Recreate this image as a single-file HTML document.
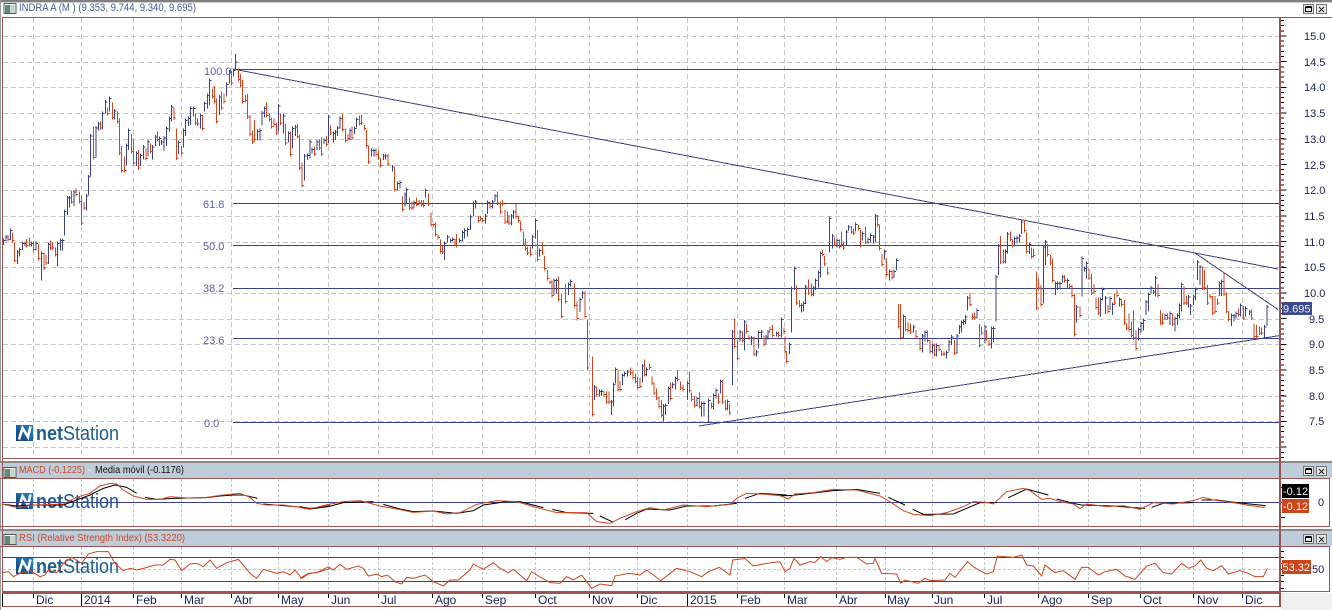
<!DOCTYPE html>
<html><head><meta charset="utf-8"><style>
html,body{margin:0;padding:0;background:#fff;width:1332px;height:610px;overflow:hidden}
svg{display:block;font-family:"Liberation Sans",sans-serif}
</style></head><body>
<svg width="1332" height="610" viewBox="0 0 1332 610" xmlns="http://www.w3.org/2000/svg">
<defs><linearGradient id="lg" x1="0" y1="1" x2="1" y2="0"><stop offset="0" stop-color="#0d3f78"/><stop offset="1" stop-color="#2a86c4"/></linearGradient></defs>
<rect width="1332" height="610" fill="#fff"/>
<rect x="1281" y="593" width="51" height="17" fill="#f0f0f0"/>
<rect x="0" y="0" width="1332" height="2" fill="#808080"/>
<rect x="0" y="2" width="1332" height="1" fill="#cfcfcf"/>
<rect x="0" y="0" width="1" height="610" fill="#9a9a9a"/>
<g shape-rendering="crispEdges">
<rect x="0" y="461" width="1332" height="2" fill="#8a8a8a"/>
<rect x="0" y="463" width="1332" height="15" fill="#bfccd9"/>
<rect x="0" y="529" width="1332" height="2" fill="#8a8a8a"/>
<rect x="0" y="531" width="1332" height="15" fill="#bfccd9"/>
<!-- grid main -->
<g stroke="#c6c6c6" stroke-width="1" stroke-dasharray="5 3" fill="none">
<path d="M3 36.5H1279M3 62.5H1279M3 87.5H1279M3 113.5H1279M3 139.5H1279M3 165.5H1279M3 190.5H1279M3 216.5H1279M3 242.5H1279M3 267.5H1279M3 293.5H1279M3 319.5H1279M3 344.5H1279M3 370.5H1279M3 396.5H1279M3 421.5H1279M3 447.5H1279"/>
<path d="M33.5 18V458M81.5 18V458M133.5 18V458M181.5 18V458M231.5 18V458M278.5 18V458M328.5 18V458M378.5 18V458M432.5 18V458M482.5 18V458M535.5 18V458M589.5 18V458M637.5 18V458M687.5 18V458M737.5 18V458M784.5 18V458M836.5 18V458M885.5 18V458M932.5 18V458M984.5 18V458M1038.5 18V458M1088.5 18V458M1140.5 18V458M1193.5 18V458M1242.5 18V458"/>
</g>
<!-- grid sub -->
<g stroke="#c6c6c6" stroke-width="1" stroke-dasharray="3 2" fill="none">
<path d="M33.5 479V526M81.5 479V526M133.5 479V526M181.5 479V526M231.5 479V526M278.5 479V526M328.5 479V526M378.5 479V526M432.5 479V526M482.5 479V526M535.5 479V526M589.5 479V526M637.5 479V526M687.5 479V526M737.5 479V526M784.5 479V526M836.5 479V526M885.5 479V526M932.5 479V526M984.5 479V526M1038.5 479V526M1088.5 479V526M1140.5 479V526M1193.5 479V526M1242.5 479V526"/>
<path d="M33.5 547V592M81.5 547V592M133.5 547V592M181.5 547V592M231.5 547V592M278.5 547V592M328.5 547V592M378.5 547V592M432.5 547V592M482.5 547V592M535.5 547V592M589.5 547V592M637.5 547V592M687.5 547V592M737.5 547V592M784.5 547V592M836.5 547V592M885.5 547V592M932.5 547V592M984.5 547V592M1038.5 547V592M1088.5 547V592M1140.5 547V592M1193.5 547V592M1242.5 547V592"/>
<path d="M3 569.5H1279"/>
</g>
</g>
<!-- logos -->
<rect x="16" y="425" width="17" height="16" fill="url(#lg)"/><path d="M19 439.5L22.5 428L28 437L30.5 426.5" fill="none" stroke="#fff" stroke-width="2.6"/>
<text x="36" y="440" font-size="20" fill="#1c5d92" textLength="83" lengthAdjust="spacingAndGlyphs"><tspan font-weight="bold">net</tspan>Station</text>
<rect x="16" y="493" width="17" height="16" fill="url(#lg)"/><path d="M19 507.5L22.5 496L28 505L30.5 494.5" fill="none" stroke="#fff" stroke-width="2.6"/>
<text x="36" y="508" font-size="20" fill="#1c5d92" textLength="83" lengthAdjust="spacingAndGlyphs"><tspan font-weight="bold">net</tspan>Station</text>
<rect x="16" y="558" width="17" height="16" fill="url(#lg)"/><path d="M19 572.5L22.5 561L28 570L30.5 559.5" fill="none" stroke="#fff" stroke-width="2.6"/>
<text x="36" y="573" font-size="20" fill="#1c5d92" textLength="83" lengthAdjust="spacingAndGlyphs"><tspan font-weight="bold">net</tspan>Station</text>
<!-- fib & trend lines -->
<g stroke="#3b4289" stroke-width="1" fill="none" shape-rendering="crispEdges">
<path d="M233 69.5H1280M233 203.5H1280M233 245.5H1280M233 288.5H1280M233 338.5H1280M233 422.5H1280"/>
<path d="M233 69L1195 253L1278 269"/>
<path d="M1195 253L1278 309.5"/>
<path d="M699 426L1280 335.5"/>
</g>
<!-- bars -->
<g fill="none" stroke-width="3" shape-rendering="crispEdges">
<g transform="translate(0,60) scale(.33333)">
<path stroke="#3b4289" d="M10 555V535m0 6h6M18 545V525m0 6h6M32 540V505m0 6h6M52 612V570m0 6h6M58 590V562m0 6h6M68 570V545m0 6h6M75 560V545m0 6h6M95 560V545m0 6h6M108 572V545m0 6h6M125 662V575m0 6h6M145 612V548m0 6h6M172 620V545m0 6h6M182 572V535m0 6h6M188 572V535m0 6h6M194 527V448m0 6h6M202 465V408m0 6h6M208 442V408m0 6h6M222 438V390m0 6h6M260 452V402m0 6h6M266 405V345m0 6h6M272 350V222m0 6h6M288 292V198m0 6h6M296 212V186m0 6h6M308 208V155m0 6h6M316 160V120m0 6h6M328 155V110m0 6h6M344 178V147m0 6h6M380 315V250m0 6h6M386 270V205m0 6h6M410 318V275m0 6h6M422 318V280m0 6h6M430 298V255m0 6h6M444 290V240m0 6h6M458 298V255m0 6h6M466 258V225m0 6h6M478 258V230m0 6h6M485 255V240m0 6h6M492 272V228m0 6h6M500 258V200m0 6h6M508 215V170m0 6h6M515 185V135m0 6h6M536 282V242m0 6h6M550 262V205m0 6h6M557 228V175m0 6h6M565 198V170m0 6h6M572 195V140m0 6h6M580 170V140m0 6h6M602 205V160m0 6h6M614 155V125m0 6h6M622 145V100m0 6h6M629 135V55m0 6h6M658 165V105m0 6h6M679 110V68m0 6h6M688 70V30m0 6h6"/>
<path stroke="#d2451e" d="M24 525V545m0-6h6M37 517V548m0-6h6M44 548V608m0-6h6M80 537V563m0-6h6M88 532V560m0-6h6M100 545V575m0-6h6M115 552V602m0-6h6M132 578V630m0-6h6M138 585V615m0-6h6M152 542V570m0-6h6M158 548V570m0-6h6M166 562V590m0-6h6M214 393V432m0-6h6M228 385V410m0-6h6M238 395V430m0-6h6M244 408V495m0-6h6M252 428V450m0-6h6M280 200V298m0-6h6M302 185V210m0-6h6M322 143V167m0-6h6M337 128V178m0-6h6M352 155V190m0-6h6M358 175V285m0-6h6M364 258V338m0-6h6M374 290V338m0-6h6M394 222V280m0-6h6M400 238V315m0-6h6M416 270V330m0-6h6M438 265V302m0-6h6M452 250V280m0-6h6M472 215V245m0-6h6M522 143V180m0-6h6M529 205V300m0-6h6M544 258V285m0-6h6M587 160V195m0-6h6M593 175V198m0-6h6M607 165V212m0-6h6M638 85V115m0-6h6M644 78V130m0-6h6M650 115V190m0-6h6M665 95V150m0-6h6M672 100V130m0-6h6"/>
</g>
<g transform="translate(230,60) scale(.33333)">
<path stroke="#3b4289" d="M10 50V25m0 6h6M16 28V-18m0 24h6M82 242V208m0 6h6M90 242V205m0 6h6M96 197V153m0 6h6M103 172V140m0 6h6M145 215V132m0 6h6M160 220V162m0 6h6M175 248V215m0 6h6M188 265V200m0 6h6M196 228V195m0 6h6M223 362V282m0 6h6M233 300V280m0 6h6M240 295V240m0 6h6M246 280V262m0 6h6M261 270V240m0 6h6M282 252V235m0 6h6M295 250V165m0 6h6M310 248V215m0 6h6M316 240V210m0 6h6M322 228V198m0 6h6M330 205V170m0 6h6M360 240V205m0 6h6M373 222V200m0 6h6M380 202V172m0 6h6M424 290V265m0 6h6M432 290V265m0 6h6M461 300V282m0 6h6M467 298V282m0 6h6M488 335V315m0 6h6M503 392V365m0 6h6M510 385V362m0 6h6M525 440V398m0 6h6M530 432V382m0 6h6M552 445V422m0 6h6M587 412V385m0 6h6M643 600V545m0 6h6M653 548V525m0 6h6M661 548V535m0 6h6M668 545V532m0 6h6M688 548V535m0 6h6M697 545V512m0 6h6M704 535V505m0 6h6M712 530V502m0 6h6M721 510V465m0 6h6M730 470V425m0 6h6M737 445V420m0 6h6M767 490V462m0 6h6M773 462V422m0 6h6M787 445V420m0 6h6M795 425V402m0 6h6M845 495V462m0 6h6M851 475V450m0 6h6M908 565V525m0 6h6M916 535V475m0 6h6M929 590V565m0 6h6M972 705V655m0 6h6M980 700V655m0 6h6M1016 705V668m0 6h6M1022 680V658m0 6h6M1050 756V712m0 6h6M1058 715V693m0 6h6"/>
<path stroke="#d2451e" d="M5 33V75m0-6h6M25 25V65m0-6h6M32 42V82m0-6h6M38 60V130m0-6h6M46 105V128m0-6h6M52 102V177m0-6h6M60 165V228m0-6h6M68 212V252m0-6h6M74 180V245m0-6h6M110 127V172m0-6h6M118 160V185m0-6h6M125 172V205m0-6h6M132 175V200m0-6h6M140 188V225m0-6h6M152 160V195m0-6h6M167 190V255m0-6h6M182 215V290m0-6h6M202 192V235m0-6h6M208 225V330m0-6h6M216 308V383m0-6h6M254 260V288m0-6h6M268 238V270m0-6h6M275 232V288m0-6h6M290 228V260m0-6h6M302 195V225m0-6h6M337 162V215m0-6h6M347 205V248m0-6h6M354 222V242m0-6h6M366 200V240m0-6h6M388 167V197m0-6h6M395 165V195m0-6h6M403 195V212m0-6h6M410 210V262m0-6h6M416 258V312m0-6h6M438 265V290m0-6h6M445 272V300m0-6h6M452 295V322m0-6h6M474 282V318m0-6h6M494 322V395m0-6h6M518 410V455m0-6h6M538 412V450m0-6h6M546 425V450m0-6h6M560 412V440m0-6h6M567 420V435m0-6h6M574 420V440m0-6h6M581 420V442m0-6h6M595 400V438m0-6h6M603 458V500m0-6h6M610 490V500m0-6h6M617 488V530m0-6h6M624 525V538m0-6h6M632 538V580m0-6h6M637 555V582m0-6h6M675 535V555m0-6h6M680 522V562m0-6h6M745 468V488m0-6h6M752 468V482m0-6h6M758 475V488m0-6h6M780 425V445m0-6h6M802 395V435m0-6h6M811 425V462m0-6h6M818 420V438m0-6h6M825 450V492m0-6h6M832 455V490m0-6h6M837 465V495m0-6h6M858 430V475m0-6h6M866 468V488m0-6h6M872 485V515m0-6h6M880 515V558m0-6h6M887 535V572m0-6h6M893 560V585m0-6h6M901 560V590m0-6h6M923 510V605m0-6h6M937 548V585m0-6h6M944 588V632m0-6h6M952 630V662m0-6h6M960 662V672m0-6h6M966 662V712m0-6h6M986 650V725m0-6h6M994 700V775m0-6h6M1007 672V730m0-6h6M1033 670V742m0-6h6M1041 725V782m0-6h6M1065 695V775m0-6h6"/>
</g>
<g transform="translate(580,200) scale(.33333)">
<path stroke="#3b4289" d="M44 600V555m0 6h6M58 590V568m0 6h6M64 588V568m0 6h6M95 645V600m0 6h6M100 620V548m0 6h6M107 550V503m0 6h6M127 555V520m0 6h6M134 530V515m0 6h6M142 530V510m0 6h6M187 548V492m0 6h6M200 528V502m0 6h6M250 665V612m0 6h6M256 645V610m0 6h6M265 612V560m0 6h6M278 565V548m0 6h6M286 568V530m0 6h6M322 600V545m0 6h6M351 620V590m0 6h6M365 650V605m0 6h6M372 650V605m0 6h6M386 668V595m0 6h6M401 628V580m0 6h6M408 595V565m0 6h6M421 580V538m0 6h6M442 632V598m0 6h6M458 555V390m0 6h6M480 425V390m0 6h6M494 452V360m0 6h6M514 435V408m0 6h6M530 470V450m0 6h6M536 445V392m0 6h6M544 415V390m0 6h6M558 432V405m0 6h6M564 418V390m0 6h6M590 410V395m0 6h6M604 412V352m0 6h6M628 462V428m0 6h6M635 398V260m0 6h6M644 270V200m0 6h6M665 338V310m0 6h6M670 335V305m0 6h6M677 312V255m0 6h6M700 288V258m0 6h6M707 270V235m0 6h6M715 262V212m0 6h6M722 232V155m0 6h6M749 158V50m0 6h6M757 145V102m0 6h6M771 142V115m0 6h6M800 138V90m0 6h6M806 92V75m0 6h6M827 95V68m0 6h6M848 122V95m0 6h6M864 132V112m0 6h6M872 128V100m0 6h6M880 130V105m0 6h6M886 128V42m0 6h6M913 178V148m0 6h6M929 242V208m0 6h6M942 232V208m0 6h6M950 212V175m0 6h6"/>
<path stroke="#d2451e" d="M22 360V510m0-6h6M37 470V650m0-6h6M50 560V590m0-6h6M72 575V590m0-6h6M80 575V612m0-6h6M87 575V612m0-6h6M114 510V575m0-6h6M120 543V575m0-6h6M152 502V525m0-6h6M159 510V538m0-6h6M166 520V550m0-6h6M172 530V568m0-6h6M180 532V565m0-6h6M193 478V530m0-6h6M209 490V508m0-6h6M216 530V555m0-6h6M222 548V585m0-6h6M230 565V600m0-6h6M237 590V625m0-6h6M244 600V652m0-6h6M272 548V602m0-6h6M292 512V545m0-6h6M302 545V570m0-6h6M309 555V575m0-6h6M328 515V578m0-6h6M335 578V605m0-6h6M344 588V622m0-6h6M358 578V625m0-6h6M394 608V625m0-6h6M415 580V612m0-6h6M427 540V612m0-6h6M436 600V632m0-6h6M449 610V645m0-6h6M464 355V445m0-6h6M472 420V482m0-6h6M487 395V428m0-6h6M500 370V400m0-6h6M507 405V420m0-6h6M522 410V468m0-6h6M552 408V440m0-6h6M570 380V395m0-6h6M577 375V412m0-6h6M596 395V412m0-6h6M612 382V400m0-6h6M615 410V460m0-6h6M620 455V490m0-6h6M650 255V315m0-6h6M658 300V322m0-6h6M686 238V285m0-6h6M694 250V290m0-6h6M727 150V170m0-6h6M734 168V198m0-6h6M743 203V225m0-6h6M764 113V138m0-6h6M778 118V145m0-6h6M784 95V140m0-6h6M791 125V150m0-6h6M814 78V102m0-6h6M820 85V105m0-6h6M835 75V92m0-6h6M842 88V143m0-6h6M857 80V132m0-6h6M893 45V80m0-6h6M899 75V152m0-6h6M906 162V200m0-6h6M920 175V230m0-6h6M936 210V238m0-6h6"/>
</g>
<g transform="translate(890,210) scale(.33333)">
<path stroke="#3b4289" d="M40 385V313m0 6h6M70 368V345m0 6h6M97 428V372m0 6h6M105 395V362m0 6h6M127 430V400m0 6h6M140 440V400m0 6h6M170 445V422m0 6h6M177 425V390m0 6h6M185 405V375m0 6h6M201 432V372m0 6h6M208 372V345m0 6h6M214 368V332m0 6h6M220 345V328m0 6h6M226 342V315m0 6h6M233 302V258m0 6h6M261 325V295m0 6h6M285 400V345m0 6h6M304 415V350m0 6h6M311 398V350m0 6h6M318 335V195m0 6h6M325 195V102m0 6h6M346 160V118m0 6h6M353 130V66m0 6h6M374 110V80m0 6h6M381 100V78m0 6h6M388 98V72m0 6h6M395 72V30m0 6h6M418 132V98m0 6h6M460 280V105m0 6h6M466 165V90m0 6h6M496 255V215m0 6h6M503 240V215m0 6h6M510 238V215m0 6h6M517 218V195m0 6h6M532 235V205m0 6h6M560 338V285m0 6h6M576 260V140m0 6h6M583 185V170m0 6h6M590 205V155m0 6h6M631 320V262m0 6h6M638 272V232m0 6h6M646 312V258m0 6h6M660 300V260m0 6h6M667 315V278m0 6h6M688 290V262m0 6h6M745 392V352m0 6h6M753 368V335m0 6h6M761 362V325m0 6h6M768 315V270m0 6h6M775 305V248m0 6h6M783 250V228m0 6h6M790 252V240m0 6h6M797 260V198m0 6h6M825 330V310m0 6h6M840 345V305m0 6h6M855 365V320m0 6h6M862 345V310m0 6h6M868 325V280m0 6h6M875 305V218m0 6h6M896 292V255m0 6h6M902 315V282m0 6h6M910 285V255m0 6h6M917 270V232m0 6h6M922 210V150m0 6h6M930 225V165m0 6h6M989 258V215m0 6h6M995 258V208m0 6h6M1024 348V310m0 6h6M1032 335V312m0 6h6M1038 325V305m0 6h6M1052 320V280m0 6h6M1067 320V290m0 6h6M1078 315V300m0 6h6M1124 382V345m0 6h6M1131 348V285m0 6h6"/>
<path stroke="#d2451e" d="M26 282V355m0-6h6M32 282V388m0-6h6M47 318V365m0-6h6M54 338V368m0-6h6M62 340V372m0-6h6M78 360V385m0-6h6M90 385V422m0-6h6M113 362V398m0-6h6M120 390V430m0-6h6M133 400V440m0-6h6M147 405V425m0-6h6M155 420V438m0-6h6M162 425V438m0-6h6M193 390V435m0-6h6M240 248V290m0-6h6M248 310V328m0-6h6M254 308V328m0-6h6M268 342V412m0-6h6M275 350V375m0-6h6M290 360V392m0-6h6M297 390V408m0-6h6M331 78V162m0-6h6M340 118V160m0-6h6M361 65V95m0-6h6M367 90V112m0-6h6M403 30V68m0-6h6M410 68V130m0-6h6M425 112V145m0-6h6M431 115V142m0-6h6M439 185V300m0-6h6M446 205V240m0-6h6M453 225V290m0-6h6M473 102V140m0-6h6M481 135V165m0-6h6M488 145V218m0-6h6M524 195V218m0-6h6M539 222V235m0-6h6M546 225V262m0-6h6M553 252V380m0-6h6M570 290V322m0-6h6M597 175V210m0-6h6M604 190V255m0-6h6M612 222V250m0-6h6M618 262V298m0-6h6M625 262V315m0-6h6M654 285V310m0-6h6M674 250V285m0-6h6M681 238V262m0-6h6M695 265V290m0-6h6M703 270V345m0-6h6M710 340V360m0-6h6M717 310V365m0-6h6M724 335V382m0-6h6M730 302V390m0-6h6M738 362V422m0-6h6M804 222V262m0-6h6M811 300V345m0-6h6M818 310V345m0-6h6M832 310V330m0-6h6M848 310V348m0-6h6M882 228V285m0-6h6M889 258V285m0-6h6M937 170V240m0-6h6M944 180V240m0-6h6M953 225V285m0-6h6M960 252V265m0-6h6M968 258V315m0-6h6M975 258V310m0-6h6M982 265V285m0-6h6M1002 188V258m0-6h6M1009 248V310m0-6h6M1016 305V335m0-6h6M1046 295V320m0-6h6M1060 288V330m0-6h6M1084 298V330m0-6h6M1092 340V385m0-6h6M1100 345V385m0-6h6M1108 350V375m0-6h6M1115 352V375m0-6h6"/>
</g>
</g>
<!-- MACD & RSI level lines -->
<g stroke="#3b4289" stroke-width="1" shape-rendering="crispEdges" fill="none">
<path d="M3 502.5H1280M3 557.5H1280M3 581.5H1280"/>
</g>
<!-- MACD lines -->
<g fill="none" stroke-width="1">
<g transform="translate(0,400) scale(.33333)" stroke-width="3">
<path stroke="#000" d="M5 312L50 318 100 315 190 315 230 300 270 285 310 265 345 255 380 262 410 280M435 292L470 298 520 295 620 293 660 288 700 285 730 285 772 295M790 312L850 317 910 322 930 325 990 318"/>
<path stroke="#d2451e" d="M5 312L50 322 100 315 190 312 230 292 270 280 300 258 330 250 350 252 370 270 400 288 440 298 480 298 510 290 560 294 620 292 660 286 700 282 720 280 750 292 770 310 800 315 850 315 900 322 930 328 990 315"/>
<path stroke="#d2451e" d="M8 518L25 515 40 530 60 520 90 512 120 530 135 525 145 510 170 518 190 490 215 472 245 490 265 462 290 455 325 455 345 490 370 512 390 505 410 510 430 505 465 495 490 495 510 478 525 480 545 512 570 492 590 490 610 500 630 480 650 505 680 488 715 478 750 520 770 535 790 508 830 520 850 515 870 525 885 510 905 535 925 522 960 515 990 505"/>
</g>
<g transform="translate(300,460) scale(.33333)" stroke-width="3">
<path stroke="#000" d="M0 140L30 147 85 140 130 128 220 125M250 133L300 147 340 155 400 153 470 160 520 152 550 135 620 125 660 125 730 143M757 148L800 158 880 160M900 168L940 187M975 180L1010 160 1040 147 1110 150 1160 138 1240 138 1310 130M1335 115L1380 100 1460 105"/>
<path stroke="#d2451e" d="M0 143L30 147 85 133 130 125 180 122 240 138 290 147 340 157 400 153 440 162 480 158 530 133 590 122 650 125 700 140 770 158 860 158 890 185 930 190 960 175 1010 155 1050 143 1090 150 1150 135 1220 140 1290 133 1310 115 1340 100 1400 103 1450 108"/>
<path stroke="#d2451e" d="M0 355L25 340 50 338 85 320 100 330 120 313 140 328 175 318 190 325 205 348 230 342 245 350 262 345 285 365 305 372 320 352 340 355 375 345 400 365 430 378 450 360 475 360 510 330 520 312 550 328 580 308 600 325 625 338 640 328 680 362 695 335 710 345 750 368 780 370 800 350 820 360 845 345 860 365 875 385 900 372 935 377 945 348 985 340 1020 345 1040 330 1060 345 1082 362 1130 325 1170 335 1205 350 1225 335 1258 322 1290 345 1298 300 1335 296 1360 318 1400 310 1440 305"/>
</g>
<g transform="translate(780,460) scale(.33333)" stroke-width="3">
<path stroke="#000" d="M0 107L30 107 90 100 160 92 230 88 300 100M325 112L375 135M398 148L430 163 520 162 560 145 600 128 650 128M685 113L740 87 805 105M830 117L880 130 905 135 1000 138 1060 143 1095 145M1115 142L1150 130 1240 128M1265 120L1310 120 1370 128 1457 137"/>
<path stroke="#d2451e" d="M0 107L25 117 45 102 100 98 160 88 230 90 300 108 330 125 370 152 400 163 450 167 500 158 550 140 580 125 620 127 640 132 680 95 730 85 750 92 785 118 810 115 840 125 880 132 900 146 920 132 980 140 1030 137 1080 148 1120 128 1180 132 1240 122 1270 112 1300 120 1360 128 1400 135 1450 142 1456 140"/>
<path stroke="#d2451e" d="M0 305L15 335 30 325 42 295 60 315 90 305 105 307 122 290 140 305 155 293 180 298 200 292 230 292 260 312 280 310 285 295 305 340 350 342 362 370 375 360 415 370 435 355 450 362 495 360 510 340 525 352 563 305 580 320 600 332 620 342 640 335 652 288 700 292 725 285 740 315 760 318 785 348 795 315 825 338 850 332 885 358 905 322 925 322 955 345 975 335 1010 328 1035 348 1065 358 1100 318 1125 310 1150 338 1175 342 1205 310 1225 325 1245 318 1262 300 1280 325 1300 332 1325 317 1345 342 1380 332 1405 340 1425 350 1450 350 1462 325"/>
</g>
</g>
<!-- frame -->
<g shape-rendering="crispEdges" fill="#9c5555">
<rect x="2" y="17" width="1" height="575"/>
<rect x="2" y="17" width="1330" height="1"/>
<rect x="2" y="458" width="1279" height="1"/>
<rect x="0" y="478" width="1330" height="1"/>
<rect x="0" y="526" width="1330" height="1"/>
<rect x="0" y="546" width="1330" height="1"/>
<rect x="2" y="591" width="1328" height="1"/>
<rect x="2" y="592" width="1279" height="2"/>
<rect x="2" y="606" width="1279" height="1"/>
<rect x="1279" y="18" width="2" height="589"/>
<rect x="1329" y="478" width="1" height="49"/>
<rect x="1329" y="546" width="1" height="46"/>
</g>
<!-- axis ticks -->
<g fill="none" stroke="#000" shape-rendering="crispEdges">
<line x1="1282.5" x2="1282.5" y1="20" y2="458" stroke-width="3" stroke-dasharray="1 4.14"/>
<line x1="1284" x2="1284" y1="35.5" y2="458" stroke-width="5" stroke-dasharray="1 24.7"/>
<path d="M1281 487.5h4M1281 502.5h4M1281 517.5h4M1281 551.5h3M1281 557.5h3M1281 563.5h3M1281 569.5h4M1281 575.5h3M1281 581.5h3M1281 588.5h3"/>
<path stroke="#000" d="M33.5 594v4M81.5 594v12M133.5 594v4M181.5 594v4M231.5 594v4M278.5 594v4M328.5 594v4M378.5 594v4M432.5 594v4M482.5 594v4M535.5 594v4M589.5 594v4M637.5 594v4M687.5 594v12M737.5 594v4M784.5 594v4M836.5 594v4M885.5 594v4M932.5 594v4M984.5 594v4M1038.5 594v4M1088.5 594v4M1140.5 594v4M1193.5 594v4M1242.5 594v4M2.5 594v12"/>
</g>
<!-- icons -->
<g shape-rendering="crispEdges">
<rect x="4" y="3.5" width="12" height="10" fill="#fff" stroke="#555"/><rect x="5" y="5" width="5" height="8" fill="#5a8f7a"/><rect x="10" y="5" width="5" height="8" fill="#c8d4cc"/>
<rect x="4" y="467.5" width="12" height="10" fill="#fff" stroke="#555"/><rect x="5" y="469" width="5" height="8" fill="#5a8f7a"/><rect x="10" y="469" width="5" height="8" fill="#c8d4cc"/>
<rect x="4" y="534.5" width="12" height="10" fill="#fff" stroke="#555"/><rect x="5" y="536" width="5" height="8" fill="#5a8f7a"/><rect x="10" y="536" width="5" height="8" fill="#c8d4cc"/>
<!-- window buttons -->
<g fill="#e6e6e6" stroke="#777">
<rect x="1303.5" y="4.5" width="10" height="9"/><rect x="1316.5" y="4.5" width="10" height="9"/>
<rect x="1303.5" y="466.5" width="10" height="9"/><rect x="1316.5" y="466.5" width="10" height="9"/>
<rect x="1303.5" y="534.5" width="10" height="9"/><rect x="1316.5" y="534.5" width="10" height="9"/>
</g>
<g fill="none" stroke="#000">
<path d="M1305.5 7.5h6v4h-6zM1305.5 6.5h6M1305.5 469.5h6v4h-6zM1305.5 468.5h6M1305.5 537.5h6v4h-6zM1305.5 536.5h6"/>
</g>
</g>
<g fill="none" stroke="#222" stroke-width="1"><path d="M1319 7l5 5M1324 7l-5 5M1319 469l5 5M1324 469l-5 5M1319 537l5 5M1324 537l-5 5"/></g>
<!-- texts -->
<text x="19" y="11" font-size="11" fill="#4c5aa2" textLength="177" lengthAdjust="spacingAndGlyphs">INDRA A (M ) (9.353, 9.744, 9.340, 9.695)</text>
<text x="19" y="473" font-size="10.5" fill="#c8492a" textLength="66" lengthAdjust="spacingAndGlyphs">MACD (-0.1225)</text>
<text x="88" y="473" font-size="10.5" fill="#fff">-</text>
<text x="95" y="473" font-size="10.5" fill="#111" textLength="89" lengthAdjust="spacingAndGlyphs">Media móvil (-0.1176)</text>
<text x="19" y="541" font-size="10.5" fill="#c8492a" textLength="166" lengthAdjust="spacingAndGlyphs">RSI (Relative Strength Index) (53.3220)</text>
<g font-size="11" fill="#5b62ad">
<text x="204" y="75">100.0</text><text x="203" y="208">61.8</text><text x="203" y="250">50.0</text><text x="203" y="292">38.2</text><text x="203" y="344">23.6</text><text x="204" y="427">0.0</text>
</g>
<g font-size="11" fill="#17205f">
<text x="1304" y="40">15.0</text><text x="1304" y="66">14.5</text><text x="1304" y="91">14.0</text><text x="1304" y="117">13.5</text><text x="1304" y="143">13.0</text><text x="1304" y="169">12.5</text><text x="1304" y="194">12.0</text><text x="1304" y="220">11.5</text><text x="1304" y="246">11.0</text><text x="1304" y="271">10.5</text><text x="1304" y="297">10.0</text><text x="1309" y="323">9.5</text><text x="1309" y="348">9.0</text><text x="1309" y="374">8.5</text><text x="1309" y="400">8.0</text><text x="1309" y="425">7.5</text>
<text x="1318" y="506">0</text><text x="1312" y="573">50</text>
</g>
<g shape-rendering="crispEdges">
<rect x="1282" y="302" width="30" height="13" fill="#3b4a8c"/>
<rect x="1282" y="484" width="27" height="14" fill="#000"/>
<rect x="1282" y="499" width="27" height="14" fill="#cc4519"/>
<rect x="1282" y="560" width="29" height="14" fill="#cc4519"/>
</g>
<g font-size="11" fill="#f2f2f8">
<text x="1283" y="312.5">9.695</text><text x="1283" y="495">-0.12</text><text x="1283" y="510">-0.12</text><text x="1282.5" y="571">53.32</text>
</g>
<g font-size="12" fill="#14235f">
<text x="36" y="604">Dic</text><text x="84" y="604">2014</text><text x="136" y="604">Feb</text><text x="184" y="604">Mar</text><text x="234" y="604">Abr</text><text x="281" y="604">May</text><text x="331" y="604">Jun</text><text x="381" y="604">Jul</text><text x="435" y="604">Ago</text><text x="485" y="604">Sep</text><text x="538" y="604">Oct</text><text x="592" y="604">Nov</text><text x="640" y="604">Dic</text><text x="690" y="604">2015</text><text x="740" y="604">Feb</text><text x="787" y="604">Mar</text><text x="839" y="604">Abr</text><text x="887" y="604">May</text><text x="934" y="604">Jun</text><text x="987" y="604">Jul</text><text x="1041" y="604">Ago</text><text x="1091" y="604">Sep</text><text x="1143" y="604">Oct</text><text x="1197" y="604">Nov</text><text x="1245" y="604">Dic</text>
</g>
</svg>
</body></html>
